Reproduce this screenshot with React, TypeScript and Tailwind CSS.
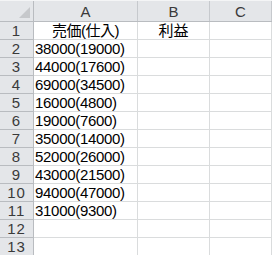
const rows: [string, string][] = [
  ["売価(仕入)", "利益"],
  ["38000(19000)", ""],
  ["44000(17600)", ""],
  ["69000(34500)", ""],
  ["16000(4800)", ""],
  ["19000(7600)", ""],
  ["35000(14000)", ""],
  ["52000(26000)", ""],
  ["43000(21500)", ""],
  ["94000(47000)", ""],
  ["31000(9300)", ""],
  ["", ""],
  ["", ""],
];

const font = { fontFamily: '"Liberation Sans", "Noto Sans CJK JP", sans-serif' };

export default function App() {
  return (
    <div className="w-[272px] h-[255px] overflow-hidden bg-white text-[15px] leading-none" style={font}>
      <div className="h-[1px] bg-[#f4f5f6]" />
      <div className="grid grid-cols-[34px_104px_72px_62px] h-[21px] bg-[#e4e6e9] border-b border-[#b9bcc0] text-[#3a3a3a]">
        <div className="relative border-r border-[#b9bcc0]">
          <div className="absolute right-[3px] bottom-[3px] w-0 h-0 border-l-[11px] border-l-transparent border-b-[11px] border-b-[#c6c8cb]" />
        </div>
        {["A", "B", "C"].map((c) => (
          <div key={c} className="flex items-end justify-center pb-[2px] border-r border-[#c6c9cd]">
            {c}
          </div>
        ))}
      </div>
      {rows.map(([a, b], i) => (
        <div key={i} className="grid grid-cols-[34px_104px_72px_62px] h-[18px]">
          <div className="flex items-end justify-center pb-[1px] bg-[#e4e6e9] border-r border-b border-[#b9bcc0] text-[#3a3a3a] tracking-[1px]">
            {i + 1}
          </div>
          <div
            className={
              "flex items-end pb-[1px] border-r border-b border-[#dadcdd] whitespace-nowrap " +
              (i === 0 ? "justify-center tracking-[-0.5px]" : "pl-[1px] tracking-[-0.3px]")
            }
          >
            {a}
          </div>
          <div className="flex items-end justify-center pb-[1px] border-r border-b border-[#dadcdd]">{b}</div>
          <div className="border-r border-b border-[#dadcdd]" />
        </div>
      ))}
    </div>
  );
}
